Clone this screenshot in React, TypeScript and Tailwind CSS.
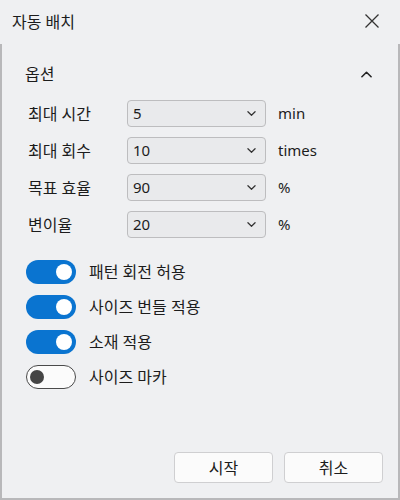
import React, { useState } from 'react';

const FONT = '"Noto Sans", "Noto Sans CJK KR", sans-serif';

const rows = [
  { label: '최대 시간', value: '5', unit: 'min' },
  { label: '최대 회수', value: '10', unit: 'times' },
  { label: '목표 효율', value: '90', unit: '%' },
  { label: '변이율', value: '20', unit: '%' },
];

const Chevron: React.FC<{ up?: boolean; className?: string }> = ({ up, className }) => (
  <svg viewBox="0 0 12 7" className={className} fill="none" stroke="currentColor" strokeWidth={1.7} strokeLinecap="round" strokeLinejoin="round">
    {up ? <path d="M1 6 L6 1 L11 6" /> : <path d="M1 1 L6 6 L11 1" />}
  </svg>
);

const Toggle: React.FC<{ on: boolean; onClick: () => void }> = ({ on, onClick }) => (
  <button
    onClick={onClick}
    className={
      on
        ? 'w-[50px] h-[24px] rounded-full bg-[#0a74d0] flex items-center justify-end pr-[4px] shrink-0'
        : 'w-[50px] h-[24px] rounded-full bg-[#fbfbfb] border-[1.5px] border-[#4a4a4a] flex items-center justify-start pl-[3px] shrink-0'
    }
  >
    {on ? (
      <span className="block w-[16px] h-[16px] rounded-full bg-white" />
    ) : (
      <span className="block w-[14px] h-[14px] rounded-full bg-[#454545]" />
    )}
  </button>
);

export default function App() {
  const [toggles, setToggles] = useState([
    { label: '패턴 회전 허용', on: true },
    { label: '사이즈 번들 적용', on: true },
    { label: '소재 적용', on: true },
    { label: '사이즈 마카', on: false },
  ]);

  const flip = (i: number) =>
    setToggles(t => t.map((x, j) => (j === i ? { ...x, on: !x.on } : x)));

  return (
    <div className="w-[400px] h-[500px] bg-[#eff0f2] flex flex-col text-[#1c1c1c]" style={{ fontFamily: FONT }}>
      {/* title bar */}
      <div className="h-[44px] flex items-center justify-between pl-[12px] pr-[21px] shrink-0">
        <span className="text-[16px]">자동 배치</span>
        <svg viewBox="0 0 14 14" className="w-[14px] h-[14px] text-[#333] -mt-[2px]" stroke="currentColor" strokeWidth={1.3} fill="none">
          <path d="M0.5 0.5 L13.5 13.5 M13.5 0.5 L0.5 13.5" />
        </svg>
      </div>

      <div className="flex-1 flex flex-col border-x-2 border-b-2 border-[#b8b8ba] pl-[23px]">
        {/* section header */}
        <div className="mt-[16px] h-[28px] flex items-center justify-between pr-[26px]">
          <span className="text-[16px]">옵션</span>
          <Chevron up className="w-[11px] h-[7px] text-[#222]" />
        </div>

        {/* selects */}
        <div className="mt-[12px] flex flex-col gap-[10px] pl-[3px]">
          {rows.map(r => (
            <div key={r.label} className="flex items-center h-[27px]">
              <span className="w-[99px] text-[16px]">{r.label}</span>
              <div className="w-[139px] h-[27px] rounded-[4px] border border-[#bdbdbf] bg-[#e9eaec] flex items-center justify-between pl-[5px] pr-[9px]">
                <span className="text-[15px]">{r.value}</span>
                <Chevron className="w-[9px] h-[5px] text-[#333]" />
              </div>
              <span className="ml-[12px] text-[15px]">{r.unit}</span>
            </div>
          ))}
        </div>

        {/* toggles */}
        <div className="mt-[22px] flex flex-col gap-[11px] pl-[1px]">
          {toggles.map((t, i) => (
            <div key={t.label} className="flex items-center gap-[13px]">
              <Toggle on={t.on} onClick={() => flip(i)} />
              <span className="text-[16px]">{t.label}</span>
            </div>
          ))}
        </div>

        {/* buttons */}
        <div className="mt-auto flex justify-end gap-[11px] pr-[15px] pb-[15px]">
          <button className="w-[99px] h-[31px] rounded-[4px] border border-[#cfcfd1] bg-[#fbfbfb] text-[16px]">시작</button>
          <button className="w-[99px] h-[31px] rounded-[4px] border border-[#cfcfd1] bg-[#fbfbfb] text-[16px]">취소</button>
        </div>
      </div>
    </div>
  );
}
